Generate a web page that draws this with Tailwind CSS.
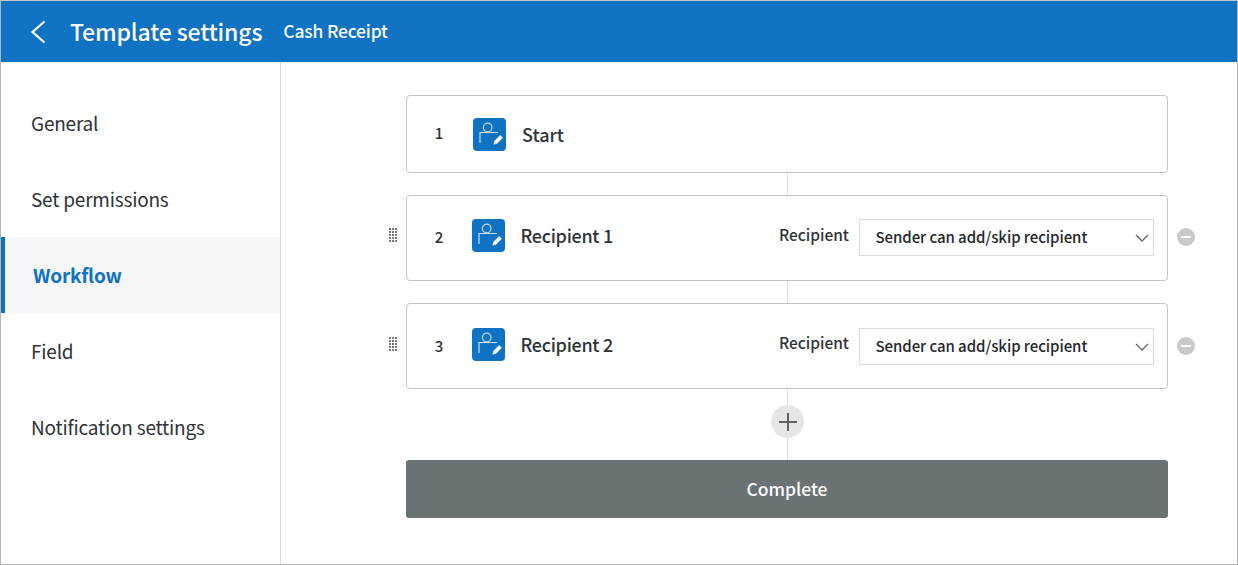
<!DOCTYPE html>
<html lang="en">
<head>
  <meta charset="utf-8"/>
  <title>Template settings</title>
  <script src="https://cdn.jsdelivr.net/npm/@tailwindcss/browser@4"></script>
</head>
<body class="bg-white">
  <div class="flex flex-col w-[1238px] h-[565px] overflow-hidden border border-[#b4b4b4] border-t-[#c8c8c8] font-['Noto_Sans_CJK_KR','Noto_Sans',sans-serif] text-[#2f3338]">
    <!-- Header -->
    <header class="flex items-center h-[61px] shrink-0 bg-[#0f72c3] text-white">
      <svg class="ml-[28px]" width="18" height="26" viewBox="0 0 18 26" fill="none" stroke="#fff" stroke-width="2.2"><path d="M15.5 2.5 3.5 13l12 10.5"/></svg>
      <h1 class="ml-[23px] text-[23px] leading-none font-medium tracking-[-0.15px] mt-[-1px]">Template settings</h1>
      <span class="ml-[21px] text-[17.5px] leading-none font-medium tracking-[-0.2px] mt-[-1px]">Cash Receipt</span>
    </header>

    <div class="flex flex-1 min-h-0">
      <!-- Sidebar -->
      <nav class="w-[280px] shrink-0 border-r border-[#dcdcdc] pt-[23px] text-[19px] tracking-[-0.2px]">
        <a class="flex items-center h-[76px] pl-[30px]">General</a>
        <a class="flex items-center h-[76px] pl-[30px]">Set permissions</a>
        <a class="flex items-center h-[76px] pl-[28px] border-l-4 border-[#0f72c3] bg-[#f4f6f8] text-[#0f72c3] font-bold">Workflow</a>
        <a class="flex items-center h-[76px] pl-[30px]">Field</a>
        <a class="flex items-center h-[76px] pl-[30px]">Notification settings</a>
      </nav>

      <!-- Workflow steps -->
      <main class="flex-1 pl-[125px] pt-[33px]">
        <div class="flex flex-col w-[762px]">
          <div class="flex items-center h-[78px] border border-[#c4c4c4] rounded-[4px] pl-[27px]">
            <span class="w-[10px] mb-[2px] text-[15px] font-medium text-center">1</span>
            <span class="ml-[29px] w-[33px] h-[33px] rounded-[4px] bg-[#0f72c3]">
              <svg width="33" height="33" viewBox="0 0 33 33" fill="none" stroke="#c5dcf1" stroke-width="1.2"><circle cx="14.7" cy="9.500" r="4.300"/><path d="M7 25v-10.500h18"/><path d="M21.800 22.800l-1 3.400 3.400-1 5.300-5.400-2.400-2.400z" fill="#fff" stroke="#fff" stroke-width=".6"/></svg>
            </span>
            <span class="ml-[16px] text-[18px] font-medium">Start</span>
          </div>

          <div class="w-px h-[22px] ml-[381px] bg-[#dcdcdc]"></div>

          <div class="relative flex items-center h-[86px] border border-[#c4c4c4] rounded-[4px] pl-[27px] pr-[13px] pb-[6px]">
            <svg class="absolute left-[-18px] top-[32px]" width="8" height="15" viewBox="0 0 8 15" fill="#777"><path d="M0 0h2v2H0zM3 0h2v2H3zM6 0h2v2H6zM0 3h2v2H0zM3 3h2v2H3zM6 3h2v2H6zM0 6h2v2H0zM3 6h2v2H3zM6 6h2v2H6zM0 9h2v2H0zM3 9h2v2H3zM6 9h2v2H6zM0 12h2v2H0zM3 12h2v2H3zM6 12h2v2H6z"/></svg>
            <span class="w-[10px] text-[15px] font-medium text-center mt-[4px]">2</span>
            <span class="ml-[28px] w-[33px] h-[33px] rounded-[4px] bg-[#0f72c3]">
              <svg width="33" height="33" viewBox="0 0 33 33" fill="none" stroke="#c5dcf1" stroke-width="1.2"><circle cx="14.7" cy="9.500" r="4.300"/><path d="M7 25v-10.500h18"/><path d="M21.800 22.800l-1 3.400 3.400-1 5.300-5.400-2.400-2.400z" fill="#fff" stroke="#fff" stroke-width=".6"/></svg>
            </span>
            <span class="ml-[15.500px] text-[18px] font-medium tracking-[-0.3px]">Recipient 1</span>
            <span class="ml-auto text-[15.5px] font-medium">Recipient</span>
            <div class="ml-[10px] flex items-center justify-between w-[295px] h-[37px] mt-[5px] border border-[#dcdcdc] pl-[15.500px] pr-[4px] text-[15px] font-medium text-[#25282c] tracking-[-0.07px]">
              <span>Sender can add/skip recipient</span>
              <svg width="14" height="8" viewBox="0 0 14 8" fill="none" stroke="#666" stroke-width="1.3"><path d="M1 1l6 6 6-6"/></svg>
            </div>
            <span class="absolute right-[-28px] top-[32px] flex items-center justify-center w-[18px] h-[18px] rounded-full bg-[#c9c9c9]"><span class="w-[10px] h-[2px] bg-white"></span></span>
          </div>

          <div class="w-px h-[22px] ml-[381px] bg-[#dcdcdc]"></div>

          <div class="relative flex items-center h-[86px] border border-[#c4c4c4] rounded-[4px] pl-[27px] pr-[13px] pb-[4px]">
            <svg class="absolute left-[-18px] top-[33px]" width="8" height="15" viewBox="0 0 8 15" fill="#777"><path d="M0 0h2v2H0zM3 0h2v2H3zM6 0h2v2H6zM0 3h2v2H0zM3 3h2v2H3zM6 3h2v2H6zM0 6h2v2H0zM3 6h2v2H3zM6 6h2v2H6zM0 9h2v2H0zM3 9h2v2H3zM6 9h2v2H6zM0 12h2v2H0zM3 12h2v2H3zM6 12h2v2H6z"/></svg>
            <span class="w-[10px] text-[15px] font-medium text-center mt-[4px]">3</span>
            <span class="ml-[28px] w-[33px] h-[33px] rounded-[4px] bg-[#0f72c3]">
              <svg width="33" height="33" viewBox="0 0 33 33" fill="none" stroke="#c5dcf1" stroke-width="1.2"><circle cx="14.7" cy="9.500" r="4.300"/><path d="M7 25v-10.500h18"/><path d="M21.800 22.800l-1 3.400 3.400-1 5.300-5.400-2.400-2.400z" fill="#fff" stroke="#fff" stroke-width=".6"/></svg>
            </span>
            <span class="ml-[15.500px] text-[18px] font-medium tracking-[-0.3px]">Recipient 2</span>
            <span class="ml-auto text-[15.5px] font-medium mt-[-2px]">Recipient</span>
            <div class="ml-[10px] flex items-center justify-between w-[295px] h-[37px] mt-[5px] border border-[#dcdcdc] pl-[15.500px] pr-[4px] text-[15px] font-medium text-[#25282c] tracking-[-0.07px]">
              <span>Sender can add/skip recipient</span>
              <svg width="14" height="8" viewBox="0 0 14 8" fill="none" stroke="#666" stroke-width="1.3"><path d="M1 1l6 6 6-6"/></svg>
            </div>
            <span class="absolute right-[-28px] top-[33px] flex items-center justify-center w-[18px] h-[18px] rounded-full bg-[#c9c9c9]"><span class="w-[10px] h-[2px] bg-white"></span></span>
          </div>

          <!-- Add step -->
          <div class="relative flex items-center justify-center h-[71px] pb-[6px]">
            <div class="absolute inset-y-0 left-[381px] w-px bg-[#dcdcdc]"></div>
            <span class="relative flex items-center justify-center w-[33px] h-[33px] rounded-full bg-[#e6e6e6] ml-[1px]">
              <svg width="18" height="18" viewBox="0 0 18 18" stroke="#5f6366" stroke-width="2"><path d="M9 0v18M0 9h18"/></svg>
            </span>
          </div>

          <button class="h-[58px] rounded-[3px] bg-[#6b7274] text-white text-[17.5px] font-medium">Complete</button>
        </div>
      </main>
    </div>
  </div>
</body>
</html>
